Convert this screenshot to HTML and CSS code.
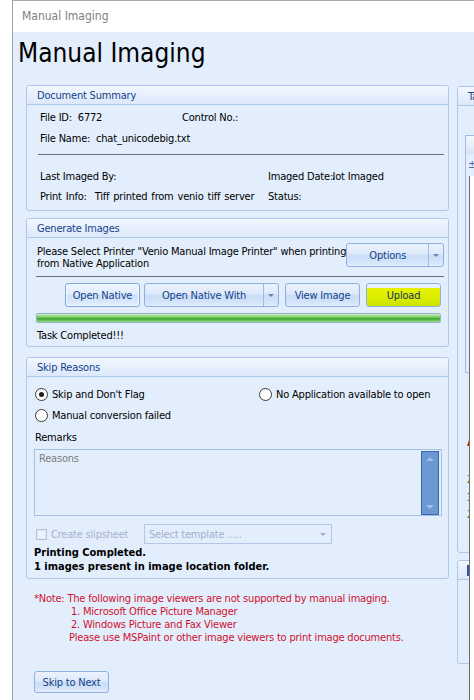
FILE: index.html
```html
<!DOCTYPE html>
<html>
<head>
<meta charset="utf-8">
<link rel="stylesheet" href="styles.css">
</head>
<body>
<div class="window">
  <div class="titlebar">Manual Imaging</div>
  <div class="content">
    <h1 class="heading">Manual Imaging</h1>
    <div class="main">
      <div class="left">
        <section class="group docsum">
          <div class="group-head">Document Summary</div>
          <div class="docsum-body">
            <div class="row"><span class="c1">File ID:&nbsp; 6772</span><span>Control No.:</span></div>
            <div class="row r2">File Name:&nbsp; chat_unicodebig.txt</div>
            <div class="sep sep1"></div>
            <div class="row r3"><span class="c2">Last Imaged By:</span><span>Imaged Date:</span><span class="clip"><span class="clip-in">Not Imaged</span></span></div>
            <div class="row r4"><span class="c2">Print Info:&nbsp; Tiff printed from venio tiff server</span><span>Status:</span></div>
          </div>
        </section>

        <section class="group gen">
          <div class="group-head">Generate Images</div>
          <div class="gen-body">
            <div class="gen-top">
              <div class="gen-text">Please Select Printer "Venio Manual Image Printer" when printing<br>from Native Application</div>
              <div class="btn split options"><span class="btn-main">Options</span><span class="btn-drop"><i class="tri"></i></span></div>
            </div>
            <div class="sep sep2"></div>
            <div class="btn-row">
              <div class="btn focus b-open">Open Native</div>
              <div class="btn split b-with"><span class="btn-main">Open Native With</span><span class="btn-drop"><i class="tri"></i></span></div>
              <div class="btn b-view">View Image</div>
              <div class="btn upload b-up">Upload</div>
            </div>
            <div class="progress"></div>
            <div class="status">Task Completed!!!</div>
          </div>
        </section>

        <section class="group skip">
          <div class="group-head">Skip Reasons</div>
          <div class="skip-body">
            <div class="radio-row rr1">
              <div class="radio-cell"><span class="radio checked"></span><span>Skip and Don't Flag</span></div>
              <div class="radio-cell2"><span class="radio"></span><span>No Application available to open</span></div>
            </div>
            <div class="radio-row rr2">
              <div class="radio-cell"><span class="radio"></span><span>Manual conversion failed</span></div>
            </div>
            <div class="remarks">Remarks</div>
            <div class="textarea">
              <div class="placeholder">Reasons</div>
              <div class="vscroll"><i class="up"></i><i class="down"></i></div>
            </div>
            <div class="slip-row">
              <span class="check"></span><span class="slip-label">Create slipsheet</span>
              <div class="combo"><span>Select template .....</span><i class="tri tri-gray"></i></div>
            </div>
            <div class="bold-msg">Printing Completed.</div>
            <div class="bold-msg">1 images present in image location folder.</div>
          </div>
        </section>

        <div class="note">
          <div>*Note: The following image viewers are not supported by manual imaging.</div>
          <div class="ind1">1. Microsoft Office Picture Manager</div>
          <div class="ind1">2. Windows Picture and Fax Viewer</div>
          <div class="ind2">Please use MSPaint or other image viewers to print image documents.</div>
        </div>

        <div class="btn skipnext">Skip to Next</div>
      </div>

      <div class="right">
        <section class="group rgroup1">
          <div class="group-head">Tasks</div>
          <div class="rbody">
            <div class="inner-box">
              <div class="inner-head"></div>
              <div class="inner-row">±</div>
              <div class="inner-white"></div>
            </div>
            <div class="alert">A</div>
            <div class="mark m1">2</div>
            <div class="mark m2">3</div>
            <div class="mark m3">2</div>
          </div>
        </section>
        <section class="group rgroup2">
          <div class="group-head"><span class="chip"></span></div>
        </section>
      </div>
    </div>
  </div>
  <div class="vline"></div>
</div>
</body>
</html>
```

FILE: styles.css
```css
* { box-sizing: border-box; }
html, body { margin: 0; overflow: hidden; }
body {
  width: 474px;
  height: 700px;
  background: #fff;
  font-family: "DejaVu Sans Condensed", "DejaVu Sans", sans-serif;
  font-size: 11px;
  letter-spacing: -0.2px;
  color: #000;
}

.window {
  margin-left: 12px;
  height: 700px;
  border-left: 1px solid #a0a0a0;
  border-top: 1px solid #acacac;
  display: flex;
  flex-direction: column;
  position: relative;
}
.titlebar {
  height: 31px;
  line-height: 31px;
  padding-left: 9px;
  font-size: 12px;
  letter-spacing: 0;
  color: #808080;
  background: #fff;
  flex: none;
}
.content {
  flex: 1;
  background: #e3eefc;
  padding-left: 5px;
}
.heading {
  margin: 0;
  padding-top: 6px;
  font-size: 26px;
  line-height: 30px;
  font-weight: normal;
  letter-spacing: 0;
  color: #000;
}
.main {
  display: flex;
  gap: 8px;
  margin-top: 17px;
  margin-left: 8px;
  align-items: flex-start;
}
.left { width: 423px; flex: none; }
.right { width: 200px; flex: none; margin-top: 1px; }

.group {
  border: 1px solid #adc8ee;
  border-radius: 3px;
  background: #e3eefc;
}
.group-head {
  height: 19px;
  line-height: 19px;
  border-bottom: 1px solid #adc8ee;
  background: linear-gradient(#f2f7fe, #dce8fa);
  color: #15428b;
  padding-left: 10px;
  border-radius: 2px 2px 0 0;
  white-space: nowrap;
}

.row { display: flex; line-height: 14px; height: 14px; white-space: nowrap; }
.sep { height: 1px; background: #6f6f6f; }

/* Document summary */
.docsum-body { padding: 6px 0 6px 13px; }
.c1 { width: 142px; flex: none; }
.c2 { width: 228px; flex: none; }
.r2 { margin-top: 7px; }
.sep1 { margin: 8px 4px 0 -2px; }
.r3 { margin-top: 15px; }
.r4 { margin-top: 6px; }
.r4 .c2 { word-spacing: 1px; }
.clip { display: inline-block; overflow: hidden; vertical-align: top; }
.clip-in { display: inline-block; margin-left: -5px; }

/* Generate images */
.gen { margin-top: 7px; }
.gen-body { padding: 5px 0 3px 0; }
.gen-top { display: flex; align-items: flex-start; }
.gen-text {
  flex: 1;
  margin-top: 3px;
  padding-left: 10px;
  line-height: 12px;
  white-space: nowrap;
}
.options { width: 98px; height: 24px; margin-right: 4px; flex: none; }
.sep2 { margin: 6px 4px 0 9px; }

.btn {
  height: 24px;
  border: 1px solid #8fb1e0;
  border-radius: 3px;
  background: linear-gradient(to bottom, #ebf2fd 0%, #dde9fa 46%, #cadef7 52%, #d2e3f9 82%, #e4effd 100%);
  color: #15428b;
  display: flex;
  align-items: center;
  justify-content: center;
  white-space: nowrap;
  flex: none;
}
.btn.split { justify-content: flex-start; align-items: stretch; }
.btn-main { flex: 1; display: flex; align-items: center; justify-content: center; }
.btn-drop {
  width: 15px;
  border-left: 1px solid #9dbbe4;
  display: flex;
  align-items: center;
  justify-content: center;
}
.tri {
  width: 0; height: 0;
  border-left: 3px solid transparent;
  border-right: 3px solid transparent;
  border-top: 3px solid #6a84ad;
}
.btn.focus {
  border-color: #7ea6e0;
  box-shadow: inset 0 0 0 1px #f4f9ff;
  background: linear-gradient(to bottom, #eef5fe 0%, #e0ecfb 46%, #cfe1f8 52%, #d8e8fb 82%, #e9f2fe 100%);
}
.btn-row { display: flex; margin-top: 6px; padding-left: 38px; }
.b-open { width: 75px; }
.b-with { width: 135px; margin-left: 4px; }
.b-view { width: 75px; margin-left: 6px; }
.b-up {
  width: 75px;
  margin-left: 6px;
  color: #1a2f55;
  background: linear-gradient(to bottom, #e8f0fc 0, #e8f0fc 4px, #e6f300 4px, #dbee00 60%, #cde400 100%);
}
.progress {
  margin: 6px 0 0 9px;
  width: 405px;
  height: 10px;
  border: 1px solid #94b2d8;
  border-radius: 2px;
  background: linear-gradient(to bottom, #d0f0c2 0%, #86d46e 35%, #3fa62c 60%, #9ddc8a 100%);
}
.status { margin-top: 6px; padding-left: 10px; line-height: 14px; }

/* Skip reasons */
.skip { margin-top: 10px; }
.skip-body { padding: 9px 0 4px 7px; }
.radio-row { display: flex; height: 16px; align-items: center; }
.rr2 { margin-top: 5px; }
.radio-cell { width: 224px; flex: none; display: flex; align-items: center; }
.radio-cell2 { display: flex; align-items: center; }
.radio {
  width: 13px; height: 13px;
  border: 1px solid #3a3a3a;
  border-radius: 50%;
  background: #fff;
  margin-left: 1px;
  margin-right: 4px;
  display: flex;
  align-items: center;
  justify-content: center;
  flex: none;
}
.radio.checked::after {
  content: "";
  width: 5px; height: 5px;
  border-radius: 50%;
  background: #1e1e1e;
}
.remarks { margin-top: 8px; margin-left: 1px; line-height: 14px; }
.textarea {
  margin-top: 4px;
  width: 408px;
  height: 67px;
  border: 1px solid #a9c1e6;
  display: flex;
}
.placeholder { flex: 1; color: #7d7d7d; padding: 3px 0 0 4px; line-height: 12px; }
.vscroll {
  width: 18px;
  margin: 1px 2px 0 0;
  background: #6b97d3;
  border: 1px solid #3c66a6;
  display: flex;
  flex-direction: column;
  justify-content: space-between;
  align-items: center;
  padding: 5px 0 5px;
}
.vscroll .up {
  width: 0; height: 0;
  border-left: 4px solid transparent;
  border-right: 4px solid transparent;
  border-bottom: 4px solid #a2c0ea;
}
.vscroll .down {
  width: 0; height: 0;
  border-left: 4px solid transparent;
  border-right: 4px solid transparent;
  border-top: 4px solid #a2c0ea;
}
.slip-row { display: flex; align-items: center; margin-top: 8px; height: 20px; }
.check {
  width: 11px; height: 11px;
  margin-left: 2px;
  border: 1px solid #b4c4dd;
  background: #eef3fb;
  box-shadow: inset 0 0 0 1px #dde7f5;
  flex: none;
}
.slip-label { color: #a3b3cf; margin-left: 4px; width: 93px; flex: none; white-space: nowrap; }
.combo {
  width: 188px;
  height: 20px;
  border: 1px solid #b3c6e4;
  display: flex;
  align-items: center;
  justify-content: space-between;
  padding: 0 5px 0 4px;
  color: #9fb0cc;
  white-space: nowrap;
}
.tri-gray { border-top-color: #a3b2c8; }
.bold-msg { font-weight: bold; letter-spacing: 0; line-height: 14px; white-space: nowrap; }
.slip-row + .bold-msg { margin-top: 2px; }

/* Note */
.note {
  margin-top: 13px;
  padding-left: 8px;
  color: #d1102e;
  line-height: 13px;
  white-space: nowrap;
}
.ind1 { padding-left: 37px; }
.ind2 { padding-left: 35px; }

.skipnext { width: 75px; height: 22px; margin: 27px 0 0 8px; }

/* Right column */
.rgroup1 { height: 467px; }
.rgroup2 { height: 104px; margin-top: 7px; }
.rbody { padding-left: 7px; position: relative; height: 446px; }
.inner-box {
  margin-top: 29px;
  height: 238px;
  border: 1px solid #a3bbdb;
}
.inner-head { height: 18px; background: linear-gradient(#f6f9fe, #d7e3f3); }
.inner-row { height: 22px; padding-left: 2px; line-height: 22px; color: #4b6a98; font-size: 11px; }
.inner-white { margin-left: 3px; height: 190px; background: #fff; }
.alert {
  margin-top: 64px;
  padding-left: 2px;
  color: #e0101a;
  font-weight: bold;
  line-height: 12px;
  white-space: nowrap;
}
.mark { padding-left: 2px; color: #8a4c00; line-height: 12px; white-space: nowrap; font-size: 10px; }
.m1 { margin-top: 25px; }
.m2 { margin-top: 6px; }
.m3 { margin-top: 5px; }
.chip {
  display: inline-block;
  width: 10px;
  height: 11px;
  margin-top: 4px;
  background: #2a58b0;
  vertical-align: top;
}
.rgroup2 .group-head { padding-left: 9px; }

.vline {
  position: absolute;
  left: 456px;
  top: 175px;
  bottom: 0;
  width: 6px;
  border-left: 1px solid #6b6b6b;
  background: #fff;
}
```
